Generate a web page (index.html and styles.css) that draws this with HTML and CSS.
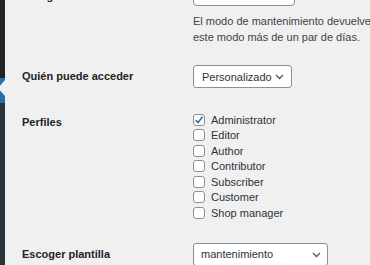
FILE: index.html
```html
<!DOCTYPE html>
<html lang="es">
<head>
    <meta charset="UTF-8">
    <meta name="viewport" content="width=device-width, initial-scale=1.0">
    <title>Modo mantenimiento</title>
    <link rel="stylesheet" href="styles.css">
</head>
<body>
    <div class="layout">
        <div id="adminmenu">
            <div class="menu-top"></div>
            <div class="menu-current"></div>
            <div class="menu-sub"></div>
        </div>

        <div class="wrap">
            <div class="form-row row-status">
                <div class="th">Código de estado</div>
                <div class="td">
                    <div class="text-input"></div>
                    <p class="description">El modo de mantenimiento devuelve el código 503. No uses<br>este modo más de un par de días.</p>
                </div>
            </div>

            <div class="form-row row-access">
                <div class="th">Quién puede acceder</div>
                <div class="td">
                    <div class="select">
                        <span>Personalizado</span>
                        <svg class="chevron" width="9" height="6" viewBox="0 0 9 6"><path d="M1 1 L4.5 4.5 L8 1" fill="none" stroke="#50575e" stroke-width="1.3"/></svg>
                    </div>
                </div>
            </div>

            <div class="form-row row-roles">
                <div class="th">Perfiles</div>
                <div class="td">
                    <ul class="roles">
                        <li><span class="checkbox checked"><svg width="10" height="10" viewBox="0 0 10 10"><path d="M1.6 5.2 L4 7.6 L8.6 1.8" fill="none" stroke="#2271b1" stroke-width="1.6"/></svg></span>Administrator</li>
                        <li><span class="checkbox"></span>Editor</li>
                        <li><span class="checkbox"></span>Author</li>
                        <li><span class="checkbox"></span>Contributor</li>
                        <li><span class="checkbox"></span>Subscriber</li>
                        <li><span class="checkbox"></span>Customer</li>
                        <li><span class="checkbox"></span>Shop manager</li>
                    </ul>
                </div>
            </div>

            <div class="form-row row-template">
                <div class="th">Escoger plantilla</div>
                <div class="td">
                    <div class="select select-wide">
                        <span>mantenimiento</span>
                        <svg class="chevron" width="9" height="6" viewBox="0 0 9 6"><path d="M1 1 L4.5 4.5 L8 1" fill="none" stroke="#50575e" stroke-width="1.3"/></svg>
                    </div>
                </div>
            </div>
        </div>
    </div>
</body>
</html>
```

FILE: styles.css
```css
body {
    margin: 0;
    background: #f0f0f1;
    font-family: "Liberation Sans", Arial, sans-serif;
    font-size: 11px;
    line-height: 16px;
    color: #1d2327;
    overflow: hidden;
}
.layout {
    display: flex;
    height: 100vh;
}
#adminmenu {
    width: 5px;
    flex-shrink: 0;
    display: flex;
    flex-direction: column;
}
.menu-top {
    height: 78px;
    background: #1d2327;
}
.menu-current {
    height: 25px;
    background: #2271b1;
    position: relative;
}
.menu-current::after {
    content: "";
    position: absolute;
    right: 0;
    top: 2px;
    border-right: 7px solid #f0f0f1;
    border-top: 8px solid transparent;
    border-bottom: 8px solid transparent;
}
.menu-sub {
    flex: 1;
    background: #2c3338;
}
.wrap {
    flex: 1;
    padding-left: 17px;
    margin-top: -19px;
    white-space: nowrap;
    overflow: hidden;
}
.form-row {
    display: flex;
}
.th {
    width: 171px;
    flex-shrink: 0;
    font-weight: bold;
    color: #1d2327;
    padding-top: 3px;
}
.td {
    flex: 1;
}
.row-status .th {
    padding-top: 7px;
}
.row-access {
    margin-top: 20px;
}
.row-roles {
    margin-top: 24px;
}
.row-roles .th {
    padding-top: 2px;
}
.row-template {
    margin-top: 22px;
}
.text-input {
    width: 102px;
    height: 25px;
    box-sizing: border-box;
    background: #fff;
    border: 1px solid #8c8f94;
    border-radius: 4px;
}
.description {
    margin: 7px 0 0;
    color: #3c434a;
}
.select {
    display: inline-flex;
    align-items: center;
    gap: 3px;
    height: 23px;
    box-sizing: border-box;
    padding: 0 7px 0 8px;
    background: #fff;
    border: 1px solid #8c8f94;
    border-radius: 3px;
    color: #2c3338;
}
.select-wide {
    width: 135px;
    padding: 0 6px 0 7px;
    justify-content: space-between;
}
.chevron {
    margin-top: 1px;
}
.roles {
    list-style: none;
    margin: 0;
    padding: 0;
}
.roles li {
    display: flex;
    align-items: center;
    gap: 6px;
    height: 15.5px;
    color: #2c3338;
}
.checkbox {
    width: 12px;
    height: 12px;
    box-sizing: border-box;
    background: #fff;
    border: 1px solid #8c8f94;
    border-radius: 3px;
    display: flex;
    align-items: center;
    justify-content: center;
}
```
